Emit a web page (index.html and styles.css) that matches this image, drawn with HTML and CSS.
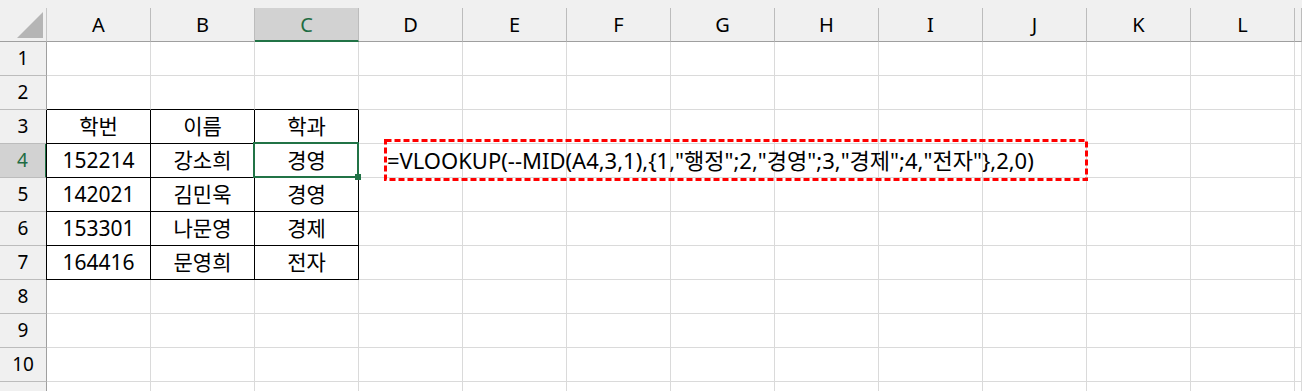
FILE: index.html
```html
<!DOCTYPE html>
<html lang="ko">
<head>
    <meta charset="UTF-8">
    <title>VLOOKUP MID</title>
    <link rel="stylesheet" href="styles.css">
</head>
<body>
    <main class="sheet">
        <div class="strip"></div>
        <div class="row head">
            <div class="corner">
                <svg width="47" height="33" viewBox="0 0 47 33"><polygon points="17,30 43,4 43,30" fill="#b5b5b5"/></svg>
            </div>
            <div class="ch">A</div>
            <div class="ch">B</div>
            <div class="ch sel">C</div>
            <div class="ch">D</div>
            <div class="ch">E</div>
            <div class="ch">F</div>
            <div class="ch">G</div>
            <div class="ch">H</div>
            <div class="ch">I</div>
            <div class="ch">J</div>
            <div class="ch">K</div>
            <div class="ch">L</div>
            <div class="ch"></div>
        </div>
        <div class="row">
            <div class="rh">1</div>
            <div class="c"></div><div class="c"></div><div class="c"></div><div class="c"></div><div class="c"></div><div class="c"></div><div class="c"></div><div class="c"></div><div class="c"></div><div class="c"></div><div class="c"></div><div class="c"></div><div class="c"></div>
        </div>
        <div class="row">
            <div class="rh">2</div>
            <div class="c top"></div><div class="c top"></div><div class="c top"></div><div class="c"></div><div class="c"></div><div class="c"></div><div class="c"></div><div class="c"></div><div class="c"></div><div class="c"></div><div class="c"></div><div class="c"></div><div class="c"></div>
        </div>
        <div class="row">
            <div class="rh">3</div>
            <div class="c t first">학번</div><div class="c t">이름</div><div class="c t">학과</div>
            <div class="c"></div><div class="c"></div><div class="c"></div><div class="c"></div><div class="c"></div><div class="c"></div><div class="c"></div><div class="c"></div><div class="c"></div><div class="c"></div>
        </div>
        <div class="row">
            <div class="rh sel">4</div>
            <div class="c t first">152214</div><div class="c t">강소희</div><div class="c t active">경영</div>
            <div class="c"></div><div class="c"></div><div class="c"></div><div class="c"></div><div class="c"></div><div class="c"></div><div class="c"></div><div class="c"></div><div class="c"></div><div class="c"></div>
        </div>
        <div class="row">
            <div class="rh">5</div>
            <div class="c t first">142021</div><div class="c t">김민욱</div><div class="c t">경영</div>
            <div class="c"></div><div class="c"></div><div class="c"></div><div class="c"></div><div class="c"></div><div class="c"></div><div class="c"></div><div class="c"></div><div class="c"></div><div class="c"></div>
        </div>
        <div class="row">
            <div class="rh">6</div>
            <div class="c t first">153301</div><div class="c t">나문영</div><div class="c t">경제</div>
            <div class="c"></div><div class="c"></div><div class="c"></div><div class="c"></div><div class="c"></div><div class="c"></div><div class="c"></div><div class="c"></div><div class="c"></div><div class="c"></div>
        </div>
        <div class="row">
            <div class="rh">7</div>
            <div class="c t first">164416</div><div class="c t">문영희</div><div class="c t">전자</div>
            <div class="c"></div><div class="c"></div><div class="c"></div><div class="c"></div><div class="c"></div><div class="c"></div><div class="c"></div><div class="c"></div><div class="c"></div><div class="c"></div>
        </div>
        <div class="row">
            <div class="rh">8</div>
            <div class="c"></div><div class="c"></div><div class="c"></div><div class="c"></div><div class="c"></div><div class="c"></div><div class="c"></div><div class="c"></div><div class="c"></div><div class="c"></div><div class="c"></div><div class="c"></div><div class="c"></div>
        </div>
        <div class="row">
            <div class="rh">9</div>
            <div class="c"></div><div class="c"></div><div class="c"></div><div class="c"></div><div class="c"></div><div class="c"></div><div class="c"></div><div class="c"></div><div class="c"></div><div class="c"></div><div class="c"></div><div class="c"></div><div class="c"></div>
        </div>
        <div class="row">
            <div class="rh">10</div>
            <div class="c"></div><div class="c"></div><div class="c"></div><div class="c"></div><div class="c"></div><div class="c"></div><div class="c"></div><div class="c"></div><div class="c"></div><div class="c"></div><div class="c"></div><div class="c"></div><div class="c"></div>
        </div>
        <div class="row">
            <div class="rh"></div>
            <div class="c"></div><div class="c"></div><div class="c"></div><div class="c"></div><div class="c"></div><div class="c"></div><div class="c"></div><div class="c"></div><div class="c"></div><div class="c"></div><div class="c"></div><div class="c"></div><div class="c"></div>
        </div>

        <!-- note box over D4:J4 -->
        <div class="formula">
            <svg class="dash" width="704" height="42" viewBox="0 0 704 42"><rect x="1.5" y="1.5" width="701" height="39" fill="none" stroke="#f00" stroke-width="3" stroke-dasharray="6 3"/></svg>
            =VLOOKUP(--MID(A4,3,1),{1,"행정";2,"경영";3,"경제";4,"전자"},2,0)
        </div>
    </main>
</body>
</html>
```

FILE: styles.css
```css
html, body {
    margin: 0;
    overflow: hidden;
}
body {
    background-color: #fff;
    font-family: "Noto Sans", "Noto Sans CJK KR", sans-serif;
    color: #000;
}
.sheet {
    position: relative;
    width: 1302px;
    height: 391px;
    overflow: hidden;
}
.strip {
    height: 8px;
    background-color: #f0f0f0;
}
.row {
    display: grid;
    grid-template-columns: 47px repeat(12, 104px) 7px;
    height: 34px;
}
.row > div {
    box-sizing: border-box;
    height: 34px;
    text-align: center;
    line-height: 33px;
}

/* headers */
.head {
    background-color: #f0f0f0;
}
.corner {
    border-right: 1px solid #c6c6c6;
    border-bottom: 1px solid #9f9f9f;
}
.corner svg {
    display: block;
}
.ch {
    font-size: 20px;
    border-right: 1px solid #bcbcbc;
    border-bottom: 1px solid #9f9f9f;
}
.ch.sel {
    background-color: #d2d2d2;
    color: #1f6c43;
    border-bottom: 2px solid #217346;
}
.rh {
    font-size: 19px;
    background-color: #f0f0f0;
    border-right: 1px solid #9f9f9f;
    border-bottom: 1px solid #bcbcbc;
}
.rh.sel {
    background-color: #d2d2d2;
    color: #1f6c43;
    border-right: 2px solid #217346;
}

/* cells */
.c {
    font-size: 21px;
    border-right: 1px solid #dadada;
    border-bottom: 1px solid #dadada;
}
.c.top {
    border-bottom-color: #000;
}
.c.t {
    border-right-color: #000;
    border-bottom-color: #000;
}
.c.first {
    box-shadow: -1px 0 0 #000;
}
.c.active {
    position: relative;
}
.c.active::before {
    content: "";
    position: absolute;
    top: -2px;
    left: -2px;
    right: -1px;
    bottom: -1px;
    border: 2px solid #217346;
}
.c.active::after {
    content: "";
    position: absolute;
    right: -3px;
    bottom: -3px;
    width: 6px;
    height: 6px;
    background-color: #217346;
}

/* dashed note */
.formula {
    position: absolute;
    left: 384px;
    top: 139px;
    width: 704px;
    height: 42px;
    box-sizing: border-box;
    padding: 3px 0 0 3px;
    font-size: 22px;
    line-height: 36px;
    white-space: nowrap;
}
.dash {
    position: absolute;
    left: 0;
    top: 0;
}
```
